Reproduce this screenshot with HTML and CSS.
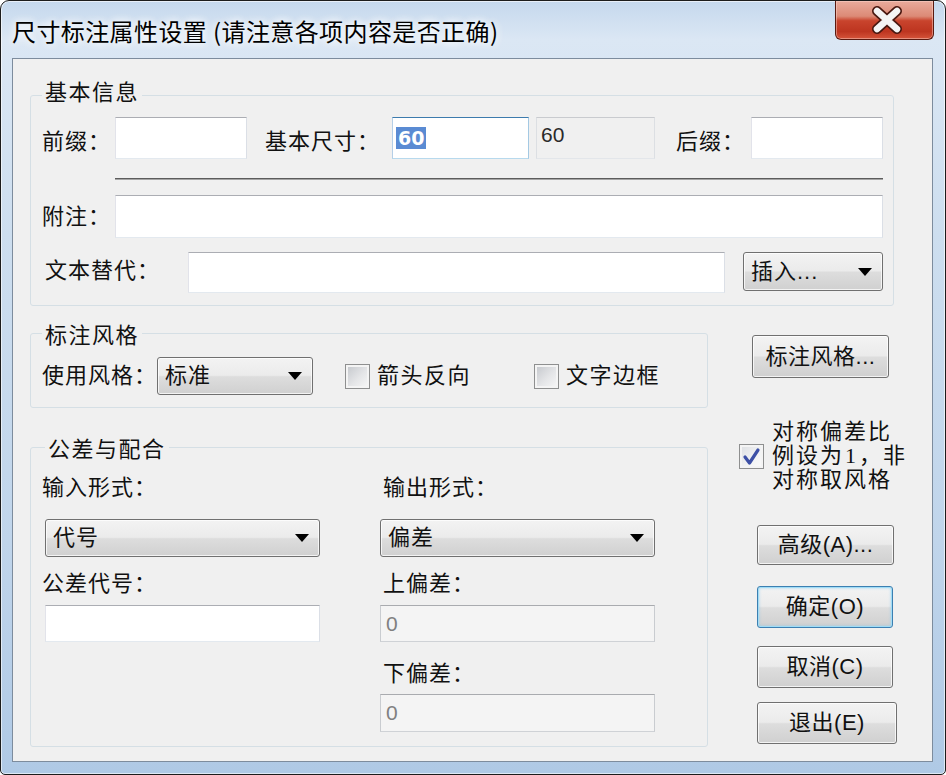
FILE: index.html
```html
<!DOCTYPE html>
<html lang="zh-CN">
<head>
<meta charset="utf-8">
<title>尺寸标注属性设置</title>
<link rel="stylesheet" href="styles.css">
</head>
<body>
<div class="window">
  <div class="titlebar">
    <div class="title">尺寸标注属性设置 (请注意各项内容是否正确)</div>
    <div class="close" aria-label="关闭">
      <svg width="32" height="28" viewBox="0 0 32 28">
        <path d="M6 5 L26 23 M26 5 L6 23" stroke="#4a1810" stroke-width="10" stroke-linecap="round"/>
        <path d="M6 5 L26 23 M26 5 L6 23" stroke="#f4f4f4" stroke-width="6.5" stroke-linecap="round"/>
      </svg>
    </div>
  </div>
  <div class="client">
    <fieldset class="group g-basic">
      <legend>基本信息</legend>
      <div class="row r1">
        <span class="lbl w73">前缀：</span>
        <div class="edit e-prefix"></div>
        <span class="lbl l-size">基本尺寸：</span>
        <div class="edit focus e-size"><span class="sel">60</span></div>
        <div class="edit disabled e-size2"><span class="dval">60</span></div>
        <span class="lbl l-suffix">后缀：</span>
        <div class="edit e-suffix"></div>
      </div>
      <div class="sep"></div>
      <div class="row">
        <span class="lbl w73">附注：</span>
        <div class="edit e-note"></div>
      </div>
      <div class="row row3">
        <span class="lbl l-alt">文本替代：</span>
        <div class="edit e-alt"></div>
        <div class="combo c-insert"><span>插入...</span><svg class="arrow" width="14" height="8" viewBox="0 0 14 8"><path d="M0 0H14L7 8Z" fill="#000"/></svg></div>
      </div>
    </fieldset>

    <div class="lower">
      <div class="left-col">
        <fieldset class="group g-style">
          <legend>标注风格</legend>
          <div class="row">
            <span class="lbl l-use">使用风格：</span>
            <div class="combo c-style"><span>标准</span><svg class="arrow" width="14" height="8" viewBox="0 0 14 8"><path d="M0 0H14L7 8Z" fill="#000"/></svg></div>
            <div class="check ck1"><span class="cb"></span><span class="ck-text">箭头反向</span></div>
            <div class="check ck2"><span class="cb"></span><span class="ck-text">文字边框</span></div>
          </div>
        </fieldset>

        <fieldset class="group g-tol">
          <legend>公差与配合</legend>
          <div class="tol-grid">
            <div class="tcol tcol-left">
              <span class="lbl tl">输入形式：</span>
              <div class="combo c-tol"><span>代号</span><svg class="arrow" width="14" height="8" viewBox="0 0 14 8"><path d="M0 0H14L7 8Z" fill="#000"/></svg></div>
              <span class="lbl tl tl2">公差代号：</span>
              <div class="edit e-tol"></div>
            </div>
            <div class="tcol tcol-right">
              <span class="lbl tl">输出形式：</span>
              <div class="combo c-tol"><span>偏差</span><svg class="arrow" width="14" height="8" viewBox="0 0 14 8"><path d="M0 0H14L7 8Z" fill="#000"/></svg></div>
              <span class="lbl tl tl2">上偏差：</span>
              <div class="edit disabled2 e-tol"><span class="zero">0</span></div>
              <span class="lbl tl tl3">下偏差：</span>
              <div class="edit disabled2 e-tol e-tol2"><span class="zero">0</span></div>
            </div>
          </div>
        </fieldset>
      </div>

      <div class="right-col">
        <div class="btn b-style">标注风格...</div>
        <div class="sym">
          <span class="cb checked"><svg width="23" height="23" viewBox="0 0 23 23"><path d="M5 12 L9.5 18 L18 5" fill="none" stroke="#3d50a6" stroke-width="3.2" stroke-linecap="round" stroke-linejoin="round"/></svg></span>
          <div class="sym-text">对称偏差比<br>例设为<span class="serif1">1</span>，非<br>对称取风格</div>
        </div>
        <div class="btn b-adv">高级(A)...</div>
        <div class="btn b-ok">确定(O)</div>
        <div class="btn b-cancel">取消(C)</div>
        <div class="btn b-exit">退出(E)</div>
      </div>
    </div>
  </div>
</div>
</body>
</html>
```

FILE: styles.css
```css
* { box-sizing: border-box; }

html, body {
  margin: 0;
  padding: 0;
}

body {
  width: 946px;
  height: 775px;
  overflow: hidden;
  background: #ffffff;
  font-family: "Liberation Sans", "Noto Sans CJK SC", sans-serif;
  font-size: 22px;
  color: #111;
}

.window {
  width: 946px;
  height: 775px;
  border: 1px solid #1c1c1c;
  border-radius: 9px 9px 5px 5px;
  background: linear-gradient(180deg, #c5d8ed 0%, #dbe7f4 5%, #cddeef 30%, #c0d5eb 70%, #afc9e5 100%);
  box-shadow: inset 0 0 0 1px rgba(255, 255, 255, 0.6);
  display: flex;
  flex-direction: column;
  overflow: hidden;
}

.titlebar {
  flex: none;
  height: 57px;
  display: flex;
  justify-content: space-between;
  align-items: flex-start;
  padding-left: 11px;
}

.title {
  margin-top: 15px;
  font-family: "Noto Sans CJK SC", sans-serif;
  font-size: 24px;
  line-height: 30px;
  letter-spacing: 0.4px;
  color: #000;
  text-shadow: 0 0 8px #ffffff, 0 0 8px #ffffff;
}

.close {
  width: 99px;
  height: 39px;
  margin-right: 11px;
  border: 1px solid #5a1a10;
  border-top: none;
  border-radius: 0 0 6px 6px;
  background: linear-gradient(180deg, #e9ab9c 0%, #dc8a76 40%, #c9442d 52%, #bd3520 80%, #d5543a 100%);
  box-shadow: inset 0 0 0 1px rgba(255, 220, 210, 0.45);
  display: flex;
  align-items: center;
  justify-content: center;
  padding-left: 4px;
}

.client {
  flex: none;
  height: 704px;
  margin: 0 12px 0 11px;
  border: 1px solid #7d8c9d;
  background: #f0f0f0;
  padding: 19px 0 0 17px;
}

/* group boxes */
.group {
  margin: 0;
  min-width: 0;
  border: 1px solid #d5dfe5;
  border-radius: 3px;
}

.group legend {
  padding: 0 3px;
  font-family: "Noto Sans CJK SC", sans-serif;
  font-size: 22px;
  line-height: 24px;
  letter-spacing: 1.5px;
  color: #111;
}

.g-basic {
  width: 864px;
  padding: 5px 10px 12px 11px;
}

.g-basic legend {
  padding-bottom: 10px;
}

.row {
  display: flex;
  align-items: center;
}

.row3 {
  margin-top: 14px;
  align-items: flex-start;
}

.row3 .lbl {
  margin-top: 6px;
}

.lbl {
  flex: none;
  line-height: 26px;
  letter-spacing: 1px;
  white-space: nowrap;
}

.r1 .lbl { padding-top: 8px; }

.w73 { width: 73px; }
.l-size { width: 127px; margin-left: 18px; }
.l-suffix { width: 75px; margin-left: 21px; }
.l-alt { width: 146px; padding-left: 3px; }
.l-use { width: 115px; }

/* edit boxes */
.edit {
  flex: none;
  height: 42px;
  background: #ffffff;
  border: 1px solid;
  border-color: #abadb3 #dbdfe6 #e3e9ef #e2e3ea;
}

.edit.focus {
  border-color: #3d7bad #a4c9e3 #b7d9ed #b5cfe7;
  padding: 7px 0 0 3px;
}

.edit.disabled {
  background: #f0f0f0;
  border-color: #c9cbcf #dcdfe3 #e3e6ea #dcdfe3;
  padding: 4px 0 0 4px;
}

.edit.disabled2 {
  background: #f4f4f4;
  border-color: #a9abaf #c9ccd0 #cfd2d6 #c9ccd0;
  display: flex;
  align-items: center;
  padding-left: 5px;
}

.e-prefix { width: 132px; }
.e-size { width: 137px; }
.e-size2 { width: 119px; margin-left: 7px; }
.e-suffix { width: 132px; }
.e-note { flex: 1; height: 43px; }
.e-alt { width: 537px; height: 41px; }

.sel {
  display: inline-block;
  height: 22px;
  line-height: 22px;
  padding: 0 2px;
  background: #5a8bd3;
  color: #ffffff;
  font-family: "DejaVu Sans", sans-serif;
  font-weight: bold;
  font-size: 19px;
}

.dval {
  font-family: "Liberation Sans", sans-serif;
  font-size: 21px;
  line-height: 26px;
  color: #2a2a2a;
}

.zero {
  font-family: "Liberation Sans", sans-serif;
  font-size: 21px;
  line-height: 24px;
  color: #808080;
}

.sep {
  height: 2px;
  margin: 19px 0 15px 73px;
  background: linear-gradient(#5c5c5c 50%, #a5a5a5 50%);
}

/* combo boxes and buttons */
.combo,
.btn {
  flex: none;
  border: 1px solid #707070;
  border-radius: 3px;
  background: linear-gradient(180deg, #f3f3f3 0%, #ebebeb 48%, #dddddd 52%, #d0d0d0 100%);
  box-shadow: inset 0 0 0 1px rgba(255, 255, 255, 0.75);
  white-space: nowrap;
}

.combo {
  display: flex;
  align-items: center;
  justify-content: space-between;
  padding: 0 10px 0 7px;
  line-height: 26px;
  letter-spacing: 1px;
}

.arrow { flex: none; }

.c-insert { width: 140px; height: 39px; margin-left: 18px; }
.c-style { width: 156px; height: 38px; }

.btn {
  display: flex;
  align-items: center;
  justify-content: center;
  letter-spacing: 0.5px;
  line-height: 26px;
}

/* check boxes */
.check {
  display: flex;
  align-items: center;
  flex: none;
}

.ck1 { width: 189px; margin-left: 32px; }

.cb {
  flex: none;
  width: 25px;
  height: 25px;
  border: 1px solid #8e8f8f;
  background: linear-gradient(135deg, #c2c5ca 0%, #e4e5e7 55%, #f8f8f8 100%);
  box-shadow: inset 0 0 0 2px #f4f4f4;
  display: flex;
  align-items: center;
  justify-content: center;
}

.cb.checked {
  background: linear-gradient(135deg, #dcdee2 0%, #f1f2f3 55%, #fbfbfb 100%);
}

.ck-text {
  margin-left: 7px;
  line-height: 26px;
  letter-spacing: 1.5px;
}

/* lower part */
.lower {
  display: flex;
  gap: 31px;
  margin-top: 15px;
}

.left-col {
  flex: none;
  width: 678px;
}

.g-style {
  width: 678px;
  padding: 12px 10px 12px 11px;
}

.g-tol {
  width: 678px;
  margin-top: 27px;
  padding: 16px 10px 14px 14px;
}

.tol-grid {
  display: grid;
  grid-template-columns: 275px 275px;
  column-gap: 60px;
  align-items: start;
}

.tcol {
  display: flex;
  flex-direction: column;
  align-items: flex-start;
}

.tcol-left .tl { margin-left: -3px; }
.tcol-right .tl { margin-left: 3px; }

.c-tol { width: 275px; height: 38px; margin-top: 18px; }
.tl2 { margin-top: 14px; }
.e-tol { width: 275px; height: 37px; margin-top: 8px; }
.tl3 { margin-top: 19px; }
.e-tol2 { height: 38px; margin-top: 7px; }

.right-col {
  flex: 1;
  display: flex;
  flex-direction: column;
  align-items: flex-start;
}

.b-style { width: 137px; height: 43px; margin: 14px 0 0 13px; }

.sym {
  margin-top: 42px;
  display: flex;
  align-items: center;
}

.sym .cb { margin-right: 8px; }

.sym-text {
  line-height: 24px;
  letter-spacing: 2px;
  white-space: nowrap;
}

.serif1 {
  font-family: "Liberation Serif", serif;
  letter-spacing: 0;
  margin: 0 3px 0 1px;
}

.b-adv { width: 137px; height: 40px; margin: 33px 0 0 18px; }
.b-ok {
  width: 136px;
  height: 42px;
  margin: 21px 0 0 18px;
  border-color: #3c7fb1;
  box-shadow: inset 0 0 0 1px #9fdcf6, inset 0 0 3px 1px rgba(120, 200, 240, 0.6);
}
.b-cancel { width: 136px; height: 42px; margin: 18px 0 0 18px; }
.b-exit { width: 140px; height: 42px; margin: 14px 0 0 18px; }
```
